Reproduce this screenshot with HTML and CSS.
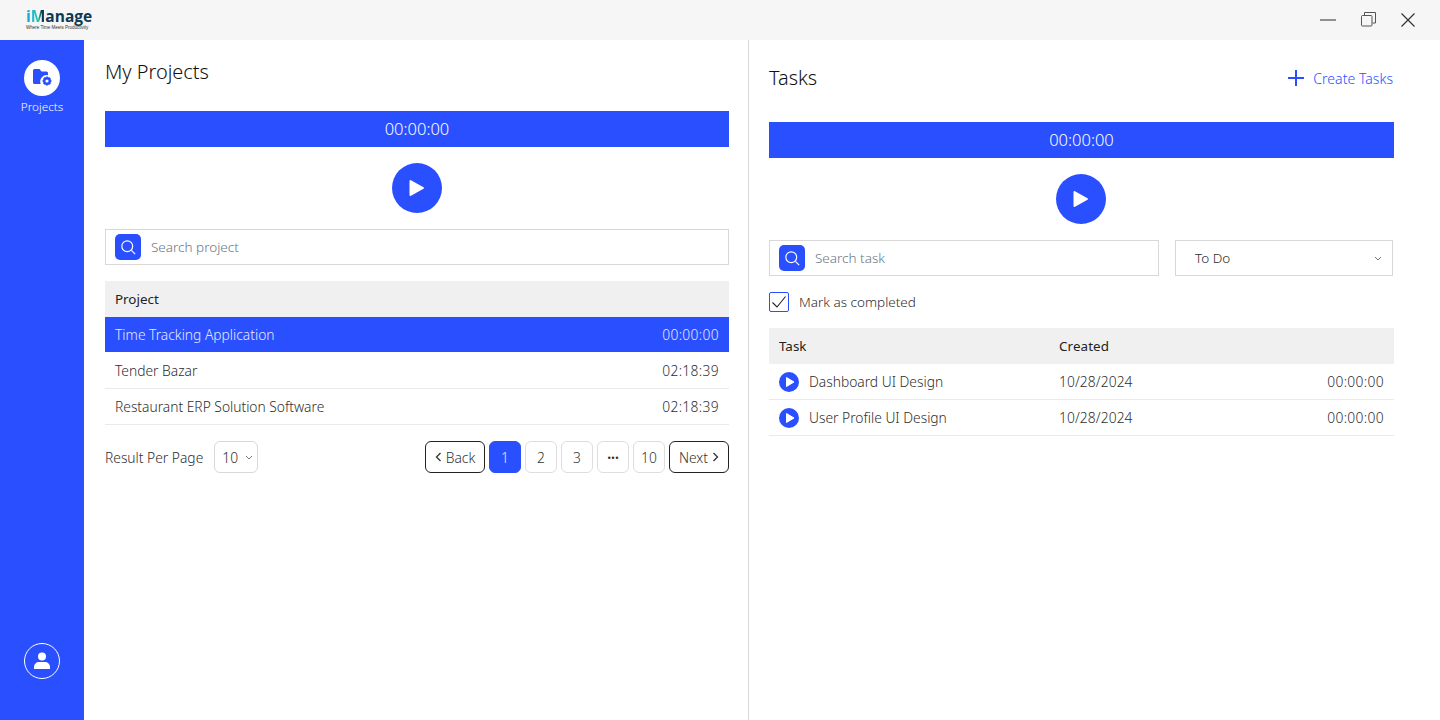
FILE: index.html
```html
<!DOCTYPE html>
<html lang="en">
<head>
    <meta charset="UTF-8">
    <meta name="viewport" content="width=device-width, initial-scale=1.0">
    <title>iManage</title>
    <link rel="stylesheet" href="styles.css">
</head>
<body>
    <header class="titlebar">
        <div class="logo">
            <div class="logo-name"><span class="logo-i">i</span><span class="logo-m">M</span>anage</div>
            <div class="logo-tag">Where Time Meets Productivity</div>
        </div>
        <div class="win-controls">
            <svg width="18" height="18" viewBox="0 0 18 18"><path d="M1 9h16" stroke="#777" stroke-width="1.600"/></svg>
            <svg width="18" height="18" viewBox="0 0 18 18" fill="none" stroke="#555" stroke-width="1"><path d="M5.500 4V1.500h11v10.500h-3"/><rect x="2.500" y="4.500" width="10.500" height="10.500" rx="1"/></svg>
            <svg width="18" height="18" viewBox="0 0 18 18"><path d="M2.500 2.500l13 13M15.500 2.500l-13 13" stroke="#333" stroke-width="1.200"/></svg>
        </div>
    </header>
    <div class="app">
        <nav class="sidebar">
            <div class="nav-item">
                <div class="nav-icon">
                    <svg width="20" height="20" viewBox="0 0 20 20">
                        <path d="M1 2.500A1.500 1.500 0 0 1 2.500 1h5l2 2.500h5A1.500 1.500 0 0 1 16 5v2.200a6.500 6.500 0 0 0-7.300 8.800H2.500A1.500 1.500 0 0 1 1 14.500z" fill="#2a4fff"/>
                        <circle cx="15" cy="13" r="2.800" fill="none" stroke="#2a4fff" stroke-width="2.400"/>
                        <path d="M15 8.500v2M15 15.500v2M10.500 13h2M17.500 13h2M11.800 9.800l1.400 1.400M16.800 14.800l1.400 1.400M18.200 9.800l-1.400 1.400M13.200 14.800l-1.400 1.400" stroke="#2a4fff" stroke-width="1.700"/>
                    </svg>
                </div>
                <span>Projects</span>
            </div>
            <div class="user-icon">
                <svg width="20" height="20" viewBox="0 0 20 20" fill="#fff"><circle cx="10" cy="5.500" r="4"/><path d="M2 18v-2c0-3 2.500-5 5-5h6c2.500 0 5 2 5 5v2z"/></svg>
            </div>
        </nav>

        <main class="pane pane-left">
            <h1 class="title title-left">My Projects</h1>
            <div class="timer">00:00:00</div>
            <button class="play-big"><svg width="18" height="20" viewBox="0 0 18 20"><path d="M2.500 3v14L15 10z" fill="#fff" stroke="#fff" stroke-width="2" stroke-linejoin="round"/></svg></button>
            <div class="search">
                <span class="search-btn"><svg width="15" height="15" viewBox="0 0 18 18" fill="none" stroke="#fff" stroke-width="1.400"><circle cx="7.500" cy="7.500" r="6.500"/><path d="M12.500 12.500L17 17"/></svg></span>
                <span class="placeholder">Search project</span>
            </div>
            <div class="table">
                <div class="row head"><span>Project</span></div>
                <div class="row selected"><span>Time Tracking Application</span><span class="num">00:00:00</span></div>
                <div class="row"><span>Tender Bazar</span><span class="num">02:18:39</span></div>
                <div class="row"><span>Restaurant ERP Solution Software</span><span class="num">02:18:39</span></div>
            </div>
            <div class="pager">
                <span class="per-page">Result Per Page</span>
                <div class="page-select">10 <svg width="8" height="5" viewBox="0 0 8 5" fill="none" stroke="#777"><path d="M1 1l3 3 3-3"/></svg></div>
                <div class="pages">
                    <button class="pg-nav"><svg width="7" height="10" viewBox="0 0 7 10" fill="none" stroke="#333" stroke-width="1.300"><path d="M5.500 1L1.500 5l4 4"/></svg>Back</button>
                    <button class="pg active">1</button>
                    <button class="pg">2</button>
                    <button class="pg">3</button>
                    <button class="pg dots">...</button>
                    <button class="pg">10</button>
                    <button class="pg-nav">Next<svg width="7" height="10" viewBox="0 0 7 10" fill="none" stroke="#333" stroke-width="1.300"><path d="M1.500 1l4 4-4 4"/></svg></button>
                </div>
            </div>
        </main>

        <section class="pane pane-right">
            <div class="tasks-top">
                <h2 class="title">Tasks</h2>
                <a class="create"><svg width="16" height="16" viewBox="0 0 16 16"><path d="M8 0v16M0 8h16" stroke="#2a4fff" stroke-width="2"/></svg>Create Tasks</a>
            </div>
            <div class="timer">00:00:00</div>
            <button class="play-big"><svg width="18" height="20" viewBox="0 0 18 20"><path d="M2.500 3v14L15 10z" fill="#fff" stroke="#fff" stroke-width="2" stroke-linejoin="round"/></svg></button>
            <div class="filters">
                <div class="search search-task">
                    <span class="search-btn"><svg width="15" height="15" viewBox="0 0 18 18" fill="none" stroke="#fff" stroke-width="1.400"><circle cx="7.500" cy="7.500" r="6.500"/><path d="M12.500 12.500L17 17"/></svg></span>
                    <span class="placeholder">Search task</span>
                </div>
                <div class="status">To Do <svg width="8" height="5" viewBox="0 0 8 5" fill="none" stroke="#777"><path d="M1 1l3 3 3-3"/></svg></div>
            </div>
            <label class="check">
                <span class="box"><svg width="16" height="14" viewBox="0 0 16 14" fill="none" stroke="#222" stroke-width="1.100"><path d="M1.500 7.500l4.500 4.500L14.500 1.500"/></svg></span>
                Mark as completed
            </label>
            <div class="table">
                <div class="row head"><span class="col-task">Task</span><span class="col-date">Created</span></div>
                <div class="row">
                    <span class="col-task with-play"><svg width="20" height="20" viewBox="0 0 20 20"><circle cx="10" cy="10" r="10" fill="#2a4fff"/><path d="M7.500 5.500v9L15 10z" fill="#fff" stroke="#fff" stroke-linejoin="round"/></svg>Dashboard UI Design</span>
                    <span class="col-date">10/28/2024</span><span class="num">00:00:00</span>
                </div>
                <div class="row">
                    <span class="col-task with-play"><svg width="20" height="20" viewBox="0 0 20 20"><circle cx="10" cy="10" r="10" fill="#2a4fff"/><path d="M7.500 5.500v9L15 10z" fill="#fff" stroke="#fff" stroke-linejoin="round"/></svg>User Profile UI Design</span>
                    <span class="col-date">10/28/2024</span><span class="num">00:00:00</span>
                </div>
            </div>
        </section>
    </div>
</body>
</html>
```

FILE: styles.css
```css
* {
    margin: 0;
    padding: 0;
    box-sizing: border-box;
}
body {
    height: 720px;
    overflow: hidden;
    background: #fff;
    color: #2e2e2e;
    font-family: 'Noto Sans', sans-serif;
    font-size: 14px;
    font-weight: 300;
}
.titlebar {
    height: 40px;
    background: #f6f6f6;
    display: flex;
    justify-content: space-between;
    align-items: center;
    padding: 0 23px 0 26px;
}
.logo {
    display: flex;
    flex-direction: column;
    padding-bottom: 2px;
}
.logo-name {
    font-family: 'Open Sans', sans-serif;
    font-size: 15.500px;
    font-weight: 700;
    line-height: 17px;
    color: #0e3a52;
}
.logo-i { color: #19a9d8; }
.logo-m {
    background: linear-gradient(90deg, #1bb3dc 0%, #2cc8a0 55%, #0e3a52 75%);
    -webkit-background-clip: text;
    background-clip: text;
    color: transparent;
}
.logo-tag {
    font-family: 'Liberation Sans', sans-serif;
    font-size: 4.500px;
    line-height: 6px;
    font-weight: 400;
    color: #333;
}
.win-controls {
    display: flex;
    gap: 22px;
}
.app {
    display: flex;
    height: 680px;
}
.sidebar {
    width: 84px;
    background: #2a4fff;
    color: #fff;
    display: flex;
    flex-direction: column;
    justify-content: space-between;
    align-items: center;
    padding: 20px 0 41px;
}
.nav-item {
    display: flex;
    flex-direction: column;
    align-items: center;
    gap: 2px;
    font-size: 11.700px;
    line-height: 16px;
}
.nav-icon {
    width: 36px;
    height: 36px;
    border-radius: 50%;
    background: #fff;
    display: flex;
    align-items: center;
    justify-content: center;
}
.user-icon {
    width: 36px;
    height: 36px;
    border-radius: 50%;
    border: 1px solid #fff;
    display: flex;
    align-items: center;
    justify-content: center;
}
.pane {
    display: flex;
    flex-direction: column;
}
.pane-left {
    width: 665px;
    padding: 0 19px 0 21px;
    border-right: 1px solid #d8d8d8;
}
.pane-right {
    width: 691px;
    padding: 0 46px 0 20px;
}
.title {
    font-size: 19.900px;
    font-weight: 300;
    line-height: 28px;
    color: #111;
}
.title-left {
    margin: 18px 0 25px;
}
.tasks-top {
    display: flex;
    justify-content: space-between;
    align-items: center;
    height: 28px;
    margin: 24px 1px 30px 0;
}
.create {
    display: flex;
    align-items: center;
    gap: 9px;
    color: #2a4fff;
    font-size: 14.100px;
}
.timer {
    height: 36px;
    background: #2a4fff;
    color: #fff;
    font-size: 16.500px;
    line-height: 36px;
    text-align: center;
}
.play-big {
    width: 50px;
    height: 50px;
    border: none;
    border-radius: 50%;
    background: #2a4fff;
    margin: 16px auto;
    display: flex;
    align-items: center;
    justify-content: center;
}
.pane-right .play-big {
    margin-left: 287px;
}
.search {
    height: 36px;
    border: 1px solid #d8d8d8;
    display: flex;
    align-items: center;
    padding-left: 9px;
    gap: 10px;
}
.search-btn {
    width: 26px;
    height: 26px;
    border-radius: 5px;
    background: #2a4fff;
    display: flex;
    align-items: center;
    justify-content: center;
}
.placeholder {
    color: #6a7686;
    font-size: 13.500px;
}
.filters {
    display: flex;
    gap: 16px;
    padding-right: 1px;
}
.search-task {
    width: 390px;
}
.status {
    flex: 1;
    height: 36px;
    border: 1px solid #d8d8d8;
    display: flex;
    align-items: center;
    justify-content: space-between;
    padding: 0 10px 0 19px;
    font-size: 13.500px;
}
.check {
    display: flex;
    align-items: center;
    gap: 10px;
    height: 20px;
    margin: 16px 0;
    font-size: 13.500px;
}
.box {
    width: 20px;
    height: 20px;
    border: 1px solid #2a4fff;
    border-radius: 2px;
    display: flex;
    align-items: center;
    justify-content: center;
}
.table {
    margin-top: 16px;
    font-size: 13.800px;
}
.check + .table {
    margin-top: 0;
}
.row {
    height: 36px;
    display: flex;
    align-items: center;
    justify-content: space-between;
    padding: 0 10px;
    border-bottom: 1px solid #eaeaea;
}
.row.head {
    background: #f0f0f0;
    border-bottom: none;
    color: #222;
    font-size: 13.400px;
    font-weight: 400;
}
.row.selected {
    background: #2a4fff;
    color: #e6eaff;
    border-bottom: 1px solid #fff;
}
.num {
    letter-spacing: 0.350px;
}
.col-task {
    width: 280px;
}
.with-play {
    display: flex;
    align-items: center;
    gap: 10px;
}
.col-date {
    flex: 1;
    letter-spacing: 0.100px;
}
.pager {
    display: flex;
    align-items: center;
    margin-top: 16px;
    height: 32px;
    font-size: 13.800px;
}
.per-page {
    margin-right: 11px;
}
.page-select {
    width: 44px;
    height: 32px;
    border: 1px solid #d8d8d8;
    border-radius: 6px;
    display: flex;
    align-items: center;
    justify-content: space-between;
    padding: 0 4px 0 7px;
}
.pages {
    margin-left: auto;
    display: flex;
    gap: 4px;
}
.pages button {
    height: 32px;
    background: #fff;
    color: #333;
    font-family: inherit;
    font-size: 13.800px;
    font-weight: 300;
    border-radius: 6px;
}
.pg {
    width: 32px;
    border: 1px solid #dedede;
}
.pages .pg.active {
    background: #2a4fff;
    border-color: #2a4fff;
    color: #e6eaff;
}
.pages .pg.dots {
    font-weight: 700;
    line-height: 20px;
    padding-bottom: 6px;
}
.pg-nav {
    width: 60px;
    border: 1px solid #222;
    display: flex;
    align-items: center;
    justify-content: center;
    gap: 4px;
}
```
